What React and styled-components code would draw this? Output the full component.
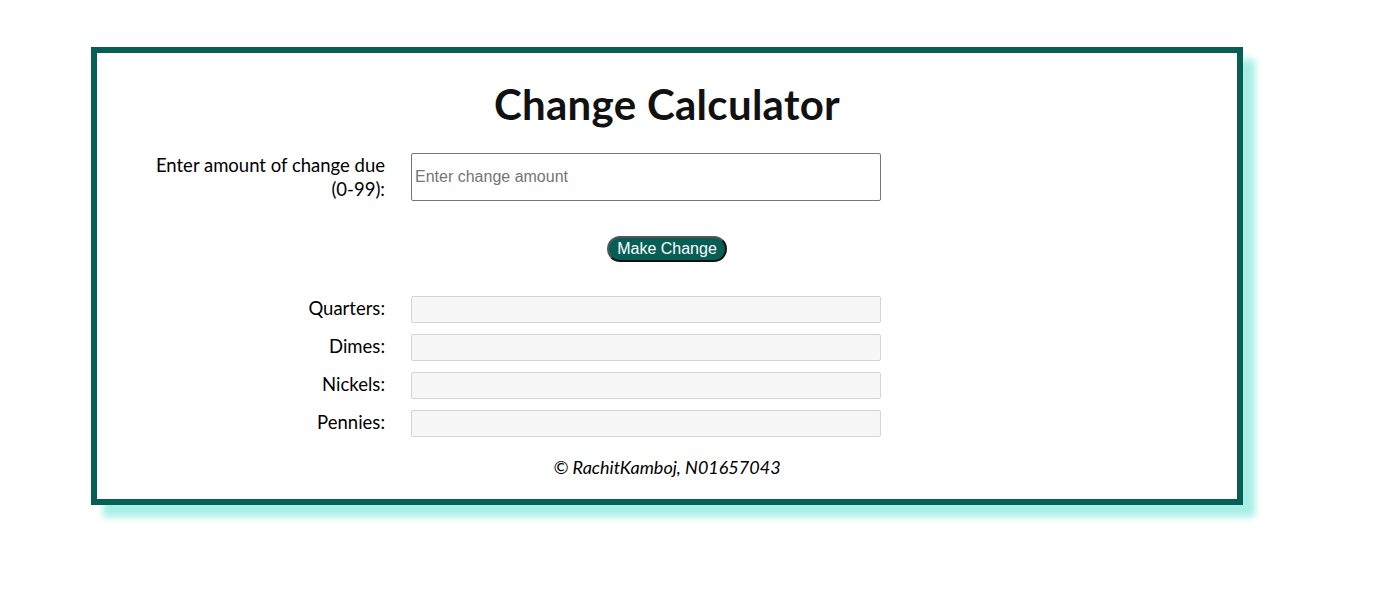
import React from "react";
import styled, { createGlobalStyle } from "styled-components";

const Global = createGlobalStyle`
  html, body { margin: 0; padding: 0; background: #fff; }
  body { font-family: Lato, "Noto Sans", sans-serif; }
`;

const Page = styled.div`
  min-height: 592px;
  box-sizing: border-box;
  padding: 47px 0 40px 91px;
`;

const Card = styled.main`
  box-sizing: content-box;
  width: 1140px;
  height: 419px;
  padding-top: 27px;
  border: 6px solid #065e55;
  box-shadow: 12px 12px 7px #a6efe6;
  display: flex;
  flex-direction: column;
`;

const Title = styled.h1`
  margin: 0;
  font-size: 42px;
  line-height: 48px;
  font-weight: 700;
  text-align: center;
  color: #111;
  letter-spacing: 0.3px;
`;

const Form = styled.div`
  display: grid;
  grid-template-columns: 240px 470px;
  column-gap: 26px;
  margin-left: 48px;
  margin-top: 25px;
`;

const Label = styled.label`
  font-size: 18.5px;
  line-height: 24px;
  text-align: right;
  color: #000;
  align-self: ${(p) => (p.$top ? "start" : "center")};
  margin-top: ${(p) => (p.$top ? "0" : "-3px")};
`;

const AmountInput = styled.input`
  box-sizing: border-box;
  width: 470px;
  height: 48px;
  border: 1px solid #767676;
  border-radius: 2px;
  padding: 0 3px;
  font-family: "Liberation Sans", Arial, sans-serif;
  font-size: 16px;
  outline: none;
  &::placeholder { color: #757575; }
`;

const ButtonRow = styled.div`
  display: flex;
  justify-content: center;
  margin-top: 35px;
`;

const Button = styled.button`
  box-sizing: border-box;
  height: 26px;
  padding: 0 8px;
  background: #065e55;
  color: #fff;
  border: 2px solid #111;
  border-top-color: #555;
  border-left-color: #555;
  border-radius: 13px;
  font-family: "Liberation Sans", Arial, sans-serif;
  font-size: 16px;
  line-height: 20px;
  cursor: pointer;
`;

const Results = styled(Form)`
  margin-top: 34px;
  row-gap: 11px;
`;

const OutputBox = styled.input`
  box-sizing: border-box;
  width: 470px;
  height: 27px;
  background: #f7f7f7;
  border: 1px solid #d4d4d4;
  border-radius: 2px;
  outline: none;
`;

const Footer = styled.footer`
  margin-top: 18px;
  text-align: center;
  font-style: italic;
  font-size: 18px;
  line-height: 24px;
  color: #000;
`;

const coins = ["Quarters", "Dimes", "Nickels", "Pennies"];

export default function App() {
  return (
    <>
      <Global />
      <Page>
        <Card>
          <Title>Change Calculator</Title>
          <Form>
            <Label $top htmlFor="amt">
              Enter amount of change due (0-99):
            </Label>
            <AmountInput id="amt" placeholder="Enter change amount" />
          </Form>
          <ButtonRow>
            <Button>Make Change</Button>
          </ButtonRow>
          <Results>
            {coins.map((c) => (
              <React.Fragment key={c}>
                <Label>{c}:</Label>
                <OutputBox readOnly />
              </React.Fragment>
            ))}
          </Results>
          <Footer>© RachitKamboj, N01657043</Footer>
        </Card>
      </Page>
    </>
  );
}
